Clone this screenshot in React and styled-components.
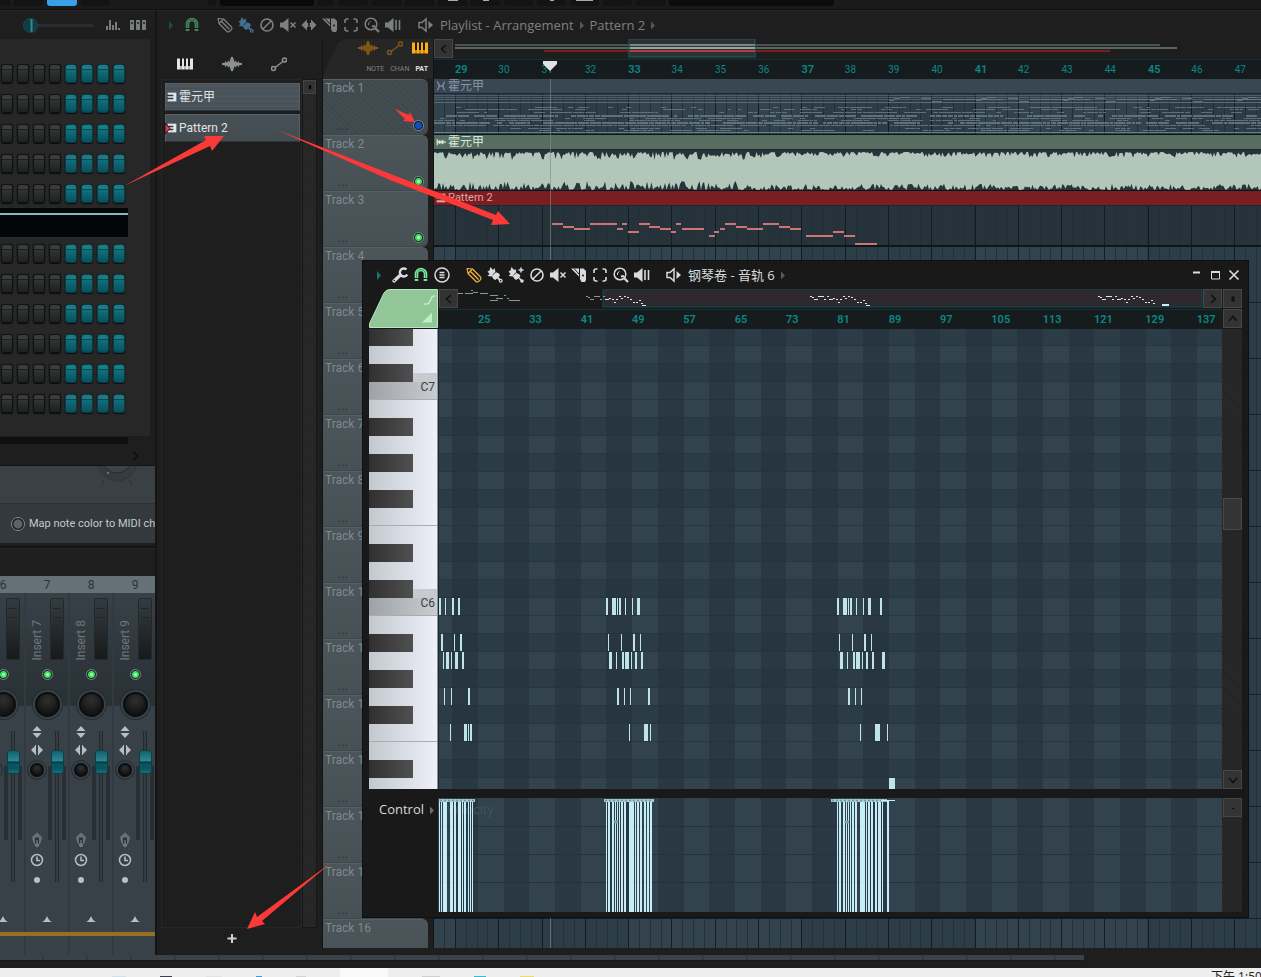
import React from "react";
import styled, { createGlobalStyle, css } from "styled-components";

const sans = `"Open Sans", "Noto Sans", "Noto Sans CJK SC", sans-serif`;
const narrow = `Roboto, "Noto Sans CJK SC", sans-serif`;
const teal = "#0b8787";

const GlobalStyle = createGlobalStyle`
  * { box-sizing: border-box; }
  html, body { margin: 0; height: 100%; background: #1e1e1e; }
  body { overflow: hidden; font-family: ${sans}; font-size: 12px; color: #a9b0b3; }
  button { border: 0; padding: 0; background: none; color: inherit; font: inherit; }
  input { margin: 0; }
  svg { display: block; }
`;

/* ---------- helpers ---------- */

const seeded = (seed) => {
  let s = seed;
  return () => {
    s = (s * 1664525 + 1013904223) % 4294967296;
    return s / 4294967296;
  };
};
const range = (n) => Array.from({ length: n }, (_, i) => i);

/* ---------- icons ---------- */

const glyphs = {
  play: <path d="M6 4l4 4.500-4 4.500z" fill="currentColor" />,
  magnet: (
    <>
      <path d="M3.500 14V7a4.500 4.500 0 0 1 9 0v7" fill="none" stroke="currentColor" strokeWidth="3.600" />
      <path d="M1 11.500h14" stroke="#1b1b1b" />
      <path d="M3.500 10.500V7a4.500 4.500 0 0 1 9 0v3.500" fill="none" stroke="#1b1b1b" strokeWidth=".8" opacity=".5" />
    </>
  ),
  pencil: (
    <g fill="none" stroke="currentColor" strokeWidth="1.200" strokeLinejoin="round">
      <path d="M1 1.500l5.500.5 8 8c1.500 2-2.500 6-4.500 4.500l-8-8z" />
      <path d="M4.500 4.500l8 8" strokeWidth="1.400" />
      <path d="M2 6.500l4.500-4.500" />
    </g>
  ),
  brush: (
    <>
      <path d="M3.500 0l2.500 3 1.500-2 1 4 3.500 1.500 1 2-4.500 4.500-2-1-1.500-2.500-4.500-.5 2-2-2-2.500 2-1z" fill="currentColor" />
      <path d="M5.500 8l4.500-4" stroke="#1b1b1b" strokeWidth=".8" />
      <path d="M10 10l4 4" stroke="currentColor" strokeWidth="1.800" />
      <circle cx="13.700" cy="13.700" r="2" fill="currentColor" />
      <circle cx="13.700" cy="13.700" r=".8" fill="#1b1b1b" />
    </>
  ),
  brushPlus: (
    <>
      <path d="M3.500 0l2.500 3 1.500-1 1 4 3 1.500 1 1.500-4 4-2-1-1.500-2.500-4.500-.5 2-2-2-2.500 2-1z" fill="currentColor" />
      <path d="M5.500 8l3.500-3" stroke="#1b1b1b" strokeWidth=".8" />
      <path d="M10 10l4 4M10.500 3h5M13 .5v5" stroke="currentColor" strokeWidth="1.500" />
      <circle cx="14" cy="14" r="1.800" fill="currentColor" />
    </>
  ),
  none: (
    <g fill="none" stroke="currentColor" strokeWidth="1.600">
      <circle cx="8" cy="8" r="6" />
      <path d="M3.700 12.300l8.600-8.600" />
    </g>
  ),
  mute: (
    <>
      <path d="M0 5.500h3L8.500 1v14L3 10.500H0z" fill="currentColor" />
      <path d="M10.500 5.500l5 5m0-5l-5 5" stroke="currentColor" strokeWidth="1.500" />
    </>
  ),
  slip: (
    <>
      <path d="M.5 8L6 2.500v3.500h4V2.500L15.500 8 10 13.500V10H6v3.500z" fill="currentColor" />
      <path d="M8 2v12" stroke="#1b1b1b" strokeWidth="1.500" />
    </>
  ),
  slice: (
    <>
      <path d="M0 1.500h8v8z" fill="currentColor" />
      <path d="M3 1.500L8 7" stroke="#1b1b1b" />
      <path d="M9 1.500h3.500L15 4v9l-1 2h-3.500L9 12z" fill="currentColor" />
      <circle cx="12" cy="8.500" r="1" fill="#1b1b1b" />
    </>
  ),
  select: (
    <path
      d="M2 6V4q0-2 2-2h1.500M10.500 2H12q2 0 2 2v2M14 10v2q0 2-2 2h-1.500M5.500 14H4q-2 0-2-2v-2"
      fill="none" stroke="currentColor" strokeWidth="1.600"
    />
  ),
  zoom: (
    <g fill="none" stroke="currentColor">
      <circle cx="7" cy="7" r="5.800" strokeWidth="1.500" />
      <path d="M6.500 4.500a3 3 0 0 0-2 3.500" strokeWidth="1" />
      <path d="M8 9.500l3-.5M11 11l4 4" strokeWidth="2.200" />
    </g>
  ),
  playback: (
    <>
      <path d="M0 5.500h3L8.500 1v14L3 10.500H0z" fill="currentColor" />
      <path d="M11 3v10M14.500 3v10" stroke="currentColor" strokeWidth="1.600" />
    </>
  ),
  speaker: (
    <>
      <path d="M1 5.500h3L8 2v12l-4-3.500H1z" fill="none" stroke="currentColor" strokeWidth="1.500" />
      <path d="M10.500 4l4.500 4-4.500 4z" fill="currentColor" />
    </>
  ),
  wrench: (
    <>
      <path d="M2 14l6.500-6" stroke="currentColor" strokeWidth="3.200" strokeLinecap="round" />
      <path d="M14.500 2.500a4 4 0 1 0 .8 5" fill="none" stroke="currentColor" strokeWidth="2.300" />
      <circle cx="2.300" cy="13.500" r=".8" fill="#1b1b1b" />
    </>
  ),
  menu: (
    <g fill="none" stroke="currentColor">
      <circle cx="8" cy="8" r="7" strokeWidth="1.500" />
      <path d="M5.500 5.500h5M5.500 8h5M5.500 10.500h5" strokeWidth="1.300" />
    </g>
  ),
  piano: (
    <>
      <path d="M0 2.500h16v11H0z" fill="currentColor" />
      <path d="M4 2v8M8 2v8M12 2v8" stroke="#1d1719" strokeWidth="2" />
      <path d="M4 9v5M8 9v5M12 9v5" stroke="#1d1719" strokeWidth=".5" />
    </>
  ),
  wave: (
    <path
      d="M0 7.200h2l1-1.700 1 1.700 1-2.200 1 1.500 1-3.500 1-1 1 1 1 3.500 1-1.500 1 2.200 1-1.700 1 1.700h2v1.600h-2l-1 1.700-1-1.700-1 2.200-1-1.500-1 3.500-1 1-1-1-1-3.500-1 1.500-1-2.200-1 1.700-1-1.700H0z"
      fill="currentColor"
    />
  ),
  line: (
    <g fill="none" stroke="currentColor" strokeWidth="1.500">
      <circle cx="2.500" cy="12.500" r="2" />
      <circle cx="13.500" cy="4" r="2" />
      <path d="M4 11.500L12 5.500" />
    </g>
  ),
  minimize: <path d="M5 5.500h7" stroke="currentColor" strokeWidth="2" />,
  maximize: (
    <>
      <path d="M4.500 5h8v7h-8z" fill="none" stroke="currentColor" />
      <path d="M4 5h9" stroke="currentColor" strokeWidth="2" />
    </>
  ),
  close: <path d="M3.500 3.500l9 9m0-9l-9 9" stroke="currentColor" strokeWidth="1.700" />,
  left: <path d="M10 4L5.500 8l4.500 4" fill="none" stroke="currentColor" strokeWidth="1.500" />,
  right: <path d="M6 4l4.500 4L6 12" fill="none" stroke="currentColor" strokeWidth="1.500" />,
  up: <path d="M4 10l4-4.500L12 10" fill="none" stroke="currentColor" strokeWidth="1.500" />,
  down: <path d="M4 6l4 4.500L12 6" fill="none" stroke="currentColor" strokeWidth="1.500" />,
  dot: <path d="M6.500 5.500h3v5h-3z" fill="currentColor" />,
  dash: <path d="M6.500 8.500h3" stroke="currentColor" />,
  plus: <path d="M8 4v9M3.500 8.500h9" stroke="currentColor" strokeWidth="2" />,
  updown: <path d="M8 2l4.500 5h-9zM3.500 9h9L8 14z" fill="currentColor" />,
  leftright: <path d="M2 8l4-4V3h1v10H6v-1zM14 8l-4-4V3H9v10h1v-1z" fill="currentColor" />,
  shape: (
    <>
      <path d="M3 5l5-4.500L13 5l-1 5-2 3H6l-2-3z" fill="#667076" />
      <path d="M6 5.500h4v6H6z" fill="#2c3439" />
      <path d="M8 8v7M6 13l2 2 2-2" fill="none" stroke="#858d92" />
    </>
  ),
  clock: (
    <g fill="none" stroke="currentColor">
      <circle cx="8" cy="8" r="5.500" strokeWidth="1.500" />
      <path d="M8 4.500V8.500h3" strokeWidth="1.500" />
    </g>
  ),
  bullet: <circle cx="8" cy="8" r="3" fill="currentColor" />,
  caret: <path d="M3 11q3-1 5-6 2 5 5 6z" fill="currentColor" />,
  bars: <path d="M1 13h2V9H1zM4 13h2V3H4zM7 13h2V8H7zM10 13h2V5h-2zM13 13h2v-2h-2z" fill="currentColor" />,
  steps: (
    <>
      <path d="M0 3h4v10H0zM6 3h4v10H6zM12 3h4v10h-4z" fill="currentColor" />
      <path d="M1 6h2M7 6h2M13 6h2" stroke="#1e1e1e" strokeWidth="1.500" />
    </>
  ),
  roll: (
    <>
      <path d="M1 1h14v14H1z" fill="currentColor" />
      <path d="M0 5.500h10M0 10.500h10" stroke="#2f383c" strokeWidth="2.500" />
    </>
  ),
  mutedClip: <path d="M2 1q6 7 0 14M14 1q-6 7 0 14M5 8h6" fill="none" stroke="currentColor" strokeWidth="2" />,
  audioClip: <path d="M1 3h2v4l4-3v3l5-3v3h4v2h-4v3L7 9v3L3 9v4H1z" fill="currentColor" />,
};

const Icon = ({ name, size = 16 }) => (
  <svg width={size} height={size} viewBox="0 0 16 16" aria-hidden="true">
    {glyphs[name]}
  </svg>
);

/* ---------- shared controls ---------- */

const ToolButton = styled.button`
  flex: none;
  width: ${(p) => p.$w || 21}px;
  height: 24px;
  display: grid;
  place-items: center;
  color: ${(p) => p.$color || "inherit"};
`;

const ToolGroup = styled.div`
  display: flex;
`;

const Crumb = styled.span`
  padding-left: ${(p) => (p.$first ? 4 : 0)}px;
  font-size: ${(p) => p.$size || 13}px;
  line-height: 18px;
  white-space: nowrap;
`;

const CrumbArrow = styled.span`
  width: 16px;
  display: grid;
  place-items: center;
  color: #54595b;
`;

const SquareButton = styled.button`
  flex: none;
  width: 19px;
  height: 19px;
  display: grid;
  place-items: center;
  background: #333;
  border: 1px solid #474747;
  color: #101010;
`;

const Led = styled.input.attrs({ type: "checkbox", defaultChecked: true })`
  appearance: none;
  flex: none;
  width: 11px;
  height: 11px;
  border-radius: 50%;
  border: 1px solid #7d878a;
  background: ${(p) =>
    p.$off
      ? "radial-gradient(circle, #1450b8 0 3px, #0a1838 4px)"
      : "radial-gradient(circle, #a8ffb6 0 1px, #43dd62 2px 3px, #102b1a 4px)"};
`;

/* ---------- application frame ---------- */

const Desktop = styled.div`
  position: relative;
  height: 100vh;
  display: flex;
  flex-direction: column;
  overflow: hidden;
  background: #1e1e1e;
`;

const TopBar = styled.header`
  flex: none;
  height: 10px;
  display: flex;
  align-items: flex-start;
  gap: 4px;
  background: #1a1a1a;
  border-bottom: 1px solid #111;
`;

const TopChip = styled.span`
  flex: none;
  width: ${(p) => p.$w}px;
  height: 6px;
  border-radius: 0 0 3px 3px;
  display: flex;
  justify-content: center;
  background: ${(p) => p.$bg || "#131313"};
  &::after {
    content: "";
    width: ${(p) => p.$mark || 0}px;
    height: 1px;
    background: #a5adb0;
  }
`;

const Workspace = styled.main`
  position: relative;
  flex: 1;
  min-height: 0;
  display: flex;
`;

const LeftColumn = styled.section`
  flex: none;
  width: 155px;
  display: flex;
  flex-direction: column;
  overflow: hidden;
`;

const MixerEdge = styled.div`
  flex: none;
  width: 86%;
  height: 6px;
  background: repeating-linear-gradient(90deg, #384248 0 42px, #303a40 42px 44px);
  border-bottom: 1px solid #15181f;
`;

const Taskbar = styled.footer`
  flex: none;
  height: 9px;
  margin-top: 7px;
  display: flex;
  align-items: flex-end;
  gap: 34px;
  padding-left: 112px;
  background: #eee;
  overflow: hidden;
  color: #222;
`;

const TaskMark = styled.span`
  width: ${(p) => p.$w}px;
  height: 1px;
  background: ${(p) => p.$c};
`;

const TaskTab = styled.span`
  width: 48px;
  height: 9px;
  background: #fafafa;
`;

const TaskClock = styled.time`
  align-self: flex-start;
  margin-left: auto;
  width: 50px;
  padding-top: 2px;
  font-size: 12px;
  line-height: 14px;
  white-space: nowrap;
`;

/* ---------- channel rack ---------- */

const RackBar = styled.div`
  flex: none;
  height: 29px;
  display: flex;
  align-items: center;
  justify-content: flex-end;
  gap: 9px;
  padding-right: 9px;
  border-top: 1px solid #272727;
  color: #777c7e;
`;

const SwingSlider = styled.input.attrs({ type: "range" })`
  appearance: none;
  width: 71px;
  height: 16px;
  margin-right: 2px;
  background: linear-gradient(#292d2f, #292d2f) center / 100% 3px no-repeat;
  &::-webkit-slider-thumb {
    appearance: none;
    width: 15px;
    height: 15px;
    border-radius: 50%;
    background: linear-gradient(90deg, #133b42 6px, #2f8b92 7px 8px, #133b42 9px);
    border: 1px solid #174b52;
  }
`;

const RackPanel = styled.div`
  flex: none;
  width: 151px;
  padding: 19px 0 18px;
  background: #272727;
  border-right: 1px solid #1a1a24;
  border-bottom: 1px solid #1a1a24;
`;

const StepRow = styled.div`
  height: 30px;
  display: flex;
  align-items: center;
  gap: 4px;
  padding-left: 1px;
`;

const Step = styled.button`
  width: 12px;
  height: 19px;
  border-radius: 3px;
  border: 1px solid ${(p) => (p.$on ? "#073a42" : "#101112")};
  box-shadow: 0 1px 1px #0a0a0a, 0 0 1px #0a0a0a;
  background: ${(p) =>
    p.$on
      ? "linear-gradient(#1b7c88 0 4px, #084650 4px 5px, #11707c 5px, #06525d)"
      : "linear-gradient(#383d3f 0 4px, #1c1f20 4px 5px, #303435 5px, #1e2122)"};
`;

const VelocityGraph = styled.div`
  width: 128px;
  height: 29px;
  margin-bottom: 1px;
  padding-top: 5px;
  background: #030608;
  &::before {
    content: "";
    display: block;
    height: 2px;
    background: #8fb3c3;
  }
`;

const RackFoot = styled.div`
  flex: none;
  height: 29px;
  display: flex;
  justify-content: flex-end;
  align-items: flex-end;
  padding: 0 12px 1px 0;
  background: linear-gradient(#0f0f0f, #0f0f0f) 0 0 / 128px 7px no-repeat;
  border-bottom: 1px solid #151515;
  color: #0c0c0c;
`;

const Inspector = styled.div`
  flex: none;
  height: 77px;
  display: flex;
  flex-direction: column;
  background: #3a4145;
`;

const InspectorTop = styled.div`
  height: 38px;
  padding-left: 88px;
  border-bottom: 1px solid #2a3033;
`;

const InspectorRow = styled.label`
  flex: 1;
  display: flex;
  align-items: center;
  gap: 4px;
  padding-left: 11px;
  background: #33393d;
  color: #c3c9cc;
  font: 11px/16px ${narrow};
  white-space: nowrap;
`;

const Radio = styled.input.attrs({ type: "radio" })`
  appearance: none;
  flex: none;
  width: 14px;
  height: 14px;
  border-radius: 50%;
  border: 1px solid #858b8e;
  background: radial-gradient(circle, #5c6366 0 4px, #1a1e20 5px);
`;

/* ---------- mixer ---------- */

const Mixer = styled.div`
  flex: 1;
  min-height: 0;
  margin-top: 5px;
  padding-top: 27px;
  border-top: 1px solid #272727;
  display: flex;
  flex-direction: column;
  outline: 2px solid #131313;
`;

const Strips = styled.div`
  flex: 1;
  display: flex;
  margin-left: -20px;
  background: #384148;
`;

const Strip = styled.div`
  flex: none;
  width: 44px;
  display: flex;
  flex-direction: column;
  border-left: 2px solid #313a40;
`;

const StripNumber = styled.div`
  height: 17px;
  margin-left: -2px;
  padding-left: 2px;
  background: #667077;
  color: #2b3236;
  font: 12px/18px ${narrow};
  text-align: center;
`;

const StripTop = styled.div`
  height: 69px;
  display: flex;
  align-items: flex-end;
  justify-content: space-between;
  padding: 5px 4px 2px 4px;
  background: linear-gradient(#384148, #2e363b);
`;

const StripName = styled.span`
  writing-mode: vertical-rl;
  transform: rotate(180deg);
  font: 12px/14px ${narrow};
  color: #6d777d;
`;

const Meter = styled.div`
  width: 14px;
  height: 62px;
  margin-left: auto;
  border: 1px solid #22292d;
  border-radius: 2px;
  background:
    linear-gradient(#1e2427, #1e2427) center 9px / 8px 1px no-repeat,
    linear-gradient(#1e2427, #1e2427) center 18px / 8px 1px no-repeat,
    linear-gradient(#343b3f, #181a1b);
`;

const StripPan = styled.div`
  height: 60px;
  display: flex;
  flex-direction: column;
  align-items: center;
  gap: 12px;
  padding-top: 7px;
  background: linear-gradient(#2e363b, #2a3135) 0 0 / 100% 44px no-repeat;
`;

const Knob = styled.button`
  flex: none;
  width: ${(p) => p.$size}px;
  height: ${(p) => p.$size}px;
  border-radius: 50%;
  border: 2px solid #0c0e0f;
  background: radial-gradient(circle at 50% 30%, #303030, #141414 70%);
  box-shadow: 0 0 0 2px #384148, 0 0 0 3px #262d31;
`;

const StripLower = styled.div`
  display: flex;
  height: 168px;
`;

const StripIcons = styled.div`
  width: 22px;
  display: flex;
  flex-direction: column;
  align-items: center;
  color: #b9bec1;
`;

const IconSlot = styled.span`
  flex: none;
  height: ${(p) => p.$h}px;
  display: grid;
  place-items: center;
`;

const FaderWrap = styled.div`
  width: 18px;
  display: flex;
  justify-content: center;
  padding-top: 9px;
  background:
    linear-gradient(90deg, #272f34 0 4px, transparent 4px 14px, #272f34 14px) 0 44px / 18px 74px no-repeat;
`;

const Fader = styled.input.attrs({ type: "range" })`
  appearance: none;
  writing-mode: vertical-lr;
  direction: rtl;
  width: 14px;
  height: 151px;
  background: linear-gradient(90deg, transparent 5px, #22292d 5px 6px, #333c42 6px 8px, #22292d 8px 9px, transparent 9px);
  &::-webkit-slider-thumb {
    appearance: none;
    width: 13px;
    height: 24px;
    border-radius: 3px;
    background: linear-gradient(#14606c, #2b8995 45%, #04343b 50%, #0b5560 60% 80%, #17707c);
    border: 1px solid #0b3f47;
  }
`;

const StripFoot = styled.div`
  flex: 1;
  display: flex;
  justify-content: center;
  margin-left: -2px;
  padding: 21px 0 0 2px;
  color: #b9bec1;
  background: linear-gradient(#96701c, #96701c) 0 42px / 100% 4px no-repeat;
`;

/* ---------- playlist ---------- */

const Playlist = styled.section`
  flex: 1;
  min-width: 0;
  display: flex;
  flex-direction: column;
  background: #1e1e1e;
  border-left: 2px solid #151515;
  border-top: 1px solid #272727;
  padding-bottom: 7px;
`;

const PlaylistBar = styled.div`
  flex: none;
  height: 28px;
  display: flex;
  align-items: center;
  gap: 12px;
  padding: 0 0 1px 3px;
  color: #7d8082;
`;

const Crumbs = styled.nav`
  display: flex;
  align-items: center;
`;

const PlaylistBody = styled.div`
  flex: 1;
  min-height: 0;
  display: flex;
`;

const Picker = styled.aside`
  flex: none;
  width: 165px;
  display: flex;
  flex-direction: column;
  padding-left: 4px;
`;

const PickerTabs = styled.div`
  height: 40px;
  display: flex;
  align-items: center;
  padding-top: 10px;
`;

const PickerTab = styled.button`
  width: 47px;
  display: grid;
  place-items: center;
  color: ${(p) => p.$color};
`;

const PickerMain = styled.div`
  flex: 1;
  min-height: 0;
  display: flex;
`;

const PickerList = styled.div`
  width: 141px;
  display: flex;
  flex-direction: column;
  gap: 3px;
  padding: 3px 1px 0 3px;
  border: 1px solid #23292b;
`;

const PatternItem = styled.button`
  position: relative;
  height: 28px;
  display: flex;
  align-items: center;
  gap: 2px;
  padding-left: 1px;
  border: 1px solid #566067;
  border-bottom-color: #2e3639;
  background: ${(p) =>
    p.$dense
      ? "repeating-linear-gradient(#4a545a 0 2px, #50595f 2px 3px, #475157 3px 5px)"
      : "linear-gradient(#465056, #424c51)"};
  color: #e0e4e6;
  font: 12px/16px ${narrow};
`;

const ActiveMark = styled.svg`
  position: absolute;
  left: -2px;
  top: 7px;
`;

const ScrollRail = styled.div`
  flex: none;
  width: ${(p) => p.$w}px;
  display: flex;
  flex-direction: column;
  background: repeating-linear-gradient(45deg, #242424 0 1px, #282828 1px 3px);
  border: 1px solid #161616;
`;

const RailCap = styled.button`
  height: 14px;
  display: grid;
  place-items: center;
  background: #333;
  border: 1px solid #444;
  color: #000;
`;

const AddRow = styled.div`
  height: 20px;
  display: flex;
  justify-content: center;
  padding-right: 20px;
  color: #ccd0d2;
`;

const TrackColumn = styled.div`
  flex: none;
  width: 111px;
  display: flex;
  flex-direction: column;
  overflow: hidden;
  border-left: 1px solid #101313;
`;

const Corner = styled.div`
  flex: none;
  height: 40px;
  display: flex;
  flex-direction: column;
  align-items: flex-end;
  padding: 0 5px 0 0;
  gap: 2px;
  background: #262626;
  clip-path: polygon(0 100%, 0 90%, 15px 10%, 22px 0, 100% 0, 100% 100%);
`;

const CornerIcons = styled.div`
  height: 18px;
  display: flex;
  align-items: center;
  gap: 9px;
`;

const CornerButton = styled.button`
  color: ${(p) => p.$color};
`;

const CornerLabels = styled.div`
  display: flex;
  gap: 6px;
  font: 7px/20px ${narrow};
  color: #808080;
  strong { color: #e2e2e2; }
`;

const TrackHead = styled.div`
  flex: none;
  height: 56px;
  width: 105px;
  display: flex;
  flex-direction: column;
  justify-content: space-between;
  padding: 0 4px 0 2px;
  border-top: 1px solid #566065;
  border-bottom: 1px solid #3d474c;
  border-radius: 0 6px 6px 0;
  font: 12px/16px ${narrow};
  color: #7f898e;
  background: ${(p) =>
    p.$muted
      ? "repeating-linear-gradient(45deg, #3f494d 0 2px, #434d51 2px 4px)"
      : "linear-gradient(#4b555a, #465055)"};
`;

const TrackFoot = styled.div`
  display: flex;
  align-items: center;
  justify-content: space-between;
  padding-left: 12px;
  font-size: 14px;
  line-height: 17px;
  color: #2a3135;
`;

const Arrangement = styled.div`
  flex: 1;
  min-width: 0;
  position: relative;
  display: flex;
  flex-direction: column;
  overflow: hidden;
  border-left: 1px solid #0f1416;
`;

const OverviewRow = styled.div`
  flex: none;
  height: 20px;
  display: flex;
  overflow: hidden;
`;

const Ruler = styled.div`
  flex: none;
  height: 19px;
  display: grid;
  grid-template-columns: repeat(${(p) => p.$count}, 1fr);
  width: ${(p) => p.$width}px;
  margin-left: ${(p) => p.$inset}px;
  font: 10px/20px ${narrow};
  color: ${teal};
`;

const RulerBand = styled.div`
  flex: none;
  overflow: hidden;
  background: #161c1e;
  border-top: 1px solid #0e3336;
`;

const Bar = styled.span`
  ${(p) =>
    p.$major &&
    css`
      font-size: 11px;
      font-weight: 600;
    `}
`;

const Lanes = styled.div`
  flex: 1;
  min-height: 0;
  overflow: hidden;
`;

const Lane = styled.div`
  height: 56px;
  overflow: hidden;
`;

const ClipTitle = styled.div`
  height: 15px;
  display: flex;
  align-items: center;
  gap: 2px;
  padding-left: 2px;
  font: ${(p) => p.$size || 12}px/14px ${narrow};
  color: ${(p) => p.$color};
  background: ${(p) => p.$bg};
  border-bottom: 1px solid #1d292f;
`;

const Canvas = styled.svg`
  width: 100%;
  height: ${(p) => p.$h};
`;

const Playhead = styled.svg`
  position: absolute;
  left: 108px;
  top: 20px;
  height: 100%;
`;

/* ---------- piano roll ---------- */

const PianoWindow = styled.section`
  position: absolute;
  left: 362px;
  right: 12px;
  top: 250px;
  bottom: 37px;
  display: flex;
  flex-direction: column;
  padding: 0 5px 5px;
  background: #191919;
  border: 1px solid #0d1012;
`;

const PianoBar = styled.div`
  flex: none;
  height: 28px;
  display: flex;
  align-items: center;
  gap: 11px;
  color: #d8dcde;
`;

const WindowButtons = styled.div`
  display: flex;
  margin-left: auto;
`;

const PianoGrid = styled.div`
  flex: 1;
  min-height: 0;
  display: grid;
  grid-template-columns: 69px minmax(0, 1fr) 20px;
  grid-template-rows: 40px minmax(0, 1fr) 9px 114px;
  padding: 0 1px;
`;

const RollHead = styled.div`
  display: flex;
  flex-direction: column;
  padding-left: 1px;
  overflow: hidden;
`;

const RollScroll = styled.div`
  height: 20px;
  display: flex;
  overflow: hidden;
`;

const HeadButtons = styled.div`
  display: flex;
  flex-direction: column;
  gap: 1px;
  padding-left: 1px;
`;

const Keyboard = styled.div`
  overflow: hidden;
  background: linear-gradient(90deg, #c3c8cf, #e1e4ec 70%, #eef1fa);
  border-right: 1px solid #8d9499;
`;

const Key = styled.div`
  height: ${(p) => (p.$first ? 17 : 18)}px;
  display: flex;
  justify-content: ${(p) => (p.$black ? "flex-start" : "flex-end")};
  padding-right: 2px;
  border-bottom: ${(p) => (p.$edge ? "1px solid #a9adb2" : "0")};
  font: 12px/10px ${narrow};
  color: #3a3f43;
  ${(p) => p.$c && css`background: linear-gradient(90deg, #9fa2a7, #c9cdd2);`}
  ${(p) =>
    p.$sharpC &&
    css`background: linear-gradient(#c7cbd0, #c7cbd0) 0 9px / 100% 9px no-repeat;`}
  &::before {
    content: "";
    display: ${(p) => (p.$black ? "block" : "none")};
    width: 44px;
    background: linear-gradient(90deg, #303030, #505050);
  }
`;

const Roll = styled.div`
  overflow: hidden;
  background: #2d3d47;
`;

const RollRail = styled.div`
  display: flex;
  flex-direction: column;
  justify-content: space-between;
  padding-left: 1px;
  background: repeating-linear-gradient(45deg, #232323 0 1px, #282828 1px 3px);
`;

const RollThumb = styled.div`
  height: 32px;
  margin-top: 169px;
  background: #343434;
  border: 1px solid #484848;
`;

const ControlLabel = styled.div`
  display: flex;
  align-items: flex-start;
  justify-content: flex-end;
  gap: 2px;
  font-size: 13px;
  line-height: 22px;
  color: #d5d9db;
  svg { margin-top: 4px; color: #6a6f71; }
`;

const ControlLane = styled.div`
  overflow: hidden;
  background: #2d3d47;
`;

const Divider = styled.div`
  grid-column: 1 / -1;
`;

const Annotations = styled.svg`
  position: absolute;
  inset: 0;
  width: 100%;
  height: 100%;
  pointer-events: none;
`;

/* ---------- drawings ---------- */

const BAR = 43.3;

const BarLines = ({ h, dim }) => (
  <g>
    {range(16).map((i) => (
      <rect key={i} x={21 + (i - 1) * BAR * 4} width={BAR * 4} height={h} fill={dim ? "#26333b" : i % 2 ? "#2d3d47" : "#32434d"} />
    ))}
    {range(160).map((i) => (
      <rect
        key={i}
        x={Math.round(21 - BAR * 2 + (i * BAR) / 4)}
        width="1"
        height={h}
        fill={i % 4 ? "#22303a" : "#101d26"}
      />
    ))}
  </g>
);

const MidiBody = () => {
  const rnd = seeded(7);
  const notes = [];
  const rows = [
    [13, 0.4], [15, 0.4], [18, 0.5], [21, 0.75], [24, 0.5], [26, 0.5],
    [28, 0.85], [31, 0.75], [34, 0.35], [36, 0.4],
  ];
  rows.forEach(([y, density]) => {
    let x = 0;
    while (x < 1400) {
      const w = [3, 5, 5, 11, 11, 22][Math.floor(rnd() * 6)];
      if (rnd() < density) notes.push([x, y, w]);
      x += w + 1;
    }
  });
  range(14).forEach((i) => {
    const x = 455 + i * 87;
    notes.push([x, 6, 5], [x + 5, 4, 6], [x + 11, 3, 10], [x + 32, 4, 10], [x + 43, 7, 10], [x + 54, 5, 60]);
  });
  return (
    <Canvas $h="41px">
      <BarLines h="41" />
      {[1, 3, 5, 8].map((y) => (
        <rect key={y} y={y} width="4000" height="1" fill="#5a6973" opacity={y === 8 ? 1 : 0.7} />
      ))}
      {notes.map(([x, y, w], i) => (
        <rect key={i} x={x} y={y} width={w} height={y === 28 || y === 21 ? 2 : 1} fill="#71808a" opacity=".75" />
      ))}
      <rect y="38" width="4000" height="1" fill="#6c7d88" />
      <rect y="40" width="4000" height="1" fill="#0d161b" />
    </Canvas>
  );
};

const WaveBody = () => {
  const rnd = seeded(21);
  const top = [];
  const bottom = [];
  range(1000).forEach((i) => {
    const x = i * 1.5;
    const loud = x > 330 ? 0.7 : 1;
    top.push(`${x},${(2 + Math.pow(rnd(), 2) * 8 * loud).toFixed(1)}`);
    bottom.unshift(`${x},${(40 - Math.pow(rnd(), 1.8) * 9 * loud).toFixed(1)}`);
  });
  return (
    <Canvas $h="41px">
      <rect width="4000" height="41" fill="#26333b" />
      <polygon points={[...top, ...bottom].join(" ")} fill="#b2c7ba" />
      <rect y="40" width="4000" height="1" fill="#0b1114" />
    </Canvas>
  );
};

const melody = [
  [696, 729, 672], [729, 761, 682], [761, 809, 687], [809, 890, 672], [890, 907, 687], [907, 923, 672],
  [923, 956, 697], [956, 988, 672], [988, 1020, 682], [1020, 1053, 687], [1053, 1069, 697],
  [1069, 1085, 672], [1085, 1151, 687], [1166, 1183, 708], [1183, 1199, 697], [1199, 1215, 687],
  [1215, 1248, 672], [1248, 1280, 682], [1280, 1329, 687], [1329, 1377, 672], [1377, 1410, 682],
  [1410, 1443, 687], [1459, 1540, 708], [1540, 1573, 697], [1573, 1605, 708], [1605, 1671, 733],
];

const MelodyBody = () => (
  <Canvas $h="41px">
    <BarLines h="41" dim />
    {melody.map(([a, b, y]) => (
      <rect key={a} x={Math.round((a - 342) / 3)} y={Math.round((y - 621) / 3)} width={Math.max(4, Math.round((b - a) / 3))} height="2" fill="#cf7474" />
    ))}
    <rect y="39" width="4000" height="2" fill="#0d161b" />
  </Canvas>
);

const EmptyLane = () => (
  <Canvas $h="56px">
    <BarLines h="56" />
    <rect y="55" width="4000" height="1" fill="#14212a" />
  </Canvas>
);

/* pitch rows from D#7 downwards; note spans are thirds of a pixel from the grid's left edge */
const rollNotes = [
  [15, [[3, 9], [21, 24], [42, 48], [60, 66], [504, 510], [522, 534], [537, 540], [543, 549], [561, 564], [582, 585], [597, 606], [1197, 1203], [1215, 1227], [1230, 1233], [1236, 1242], [1254, 1257], [1275, 1278], [1290, 1299], [1326, 1332]]],
  [17, [[9, 15], [48, 51], [66, 72], [510, 513], [549, 552], [585, 591], [606, 609], [1203, 1206], [1242, 1245], [1278, 1284], [1299, 1302]]],
  [18, [[15, 18], [24, 33], [39, 42], [51, 60], [72, 78], [513, 522], [534, 537], [552, 558], [561, 573], [579, 582], [591, 597], [609, 615], [1206, 1215], [1227, 1230], [1245, 1251], [1254, 1266], [1272, 1275], [1284, 1290], [1302, 1308], [1332, 1341]]],
  [20, [[18, 21], [39, 42], [90, 96], [537, 543], [558, 561], [576, 579], [630, 636], [1230, 1236], [1251, 1254], [1269, 1272]]],
  [22, [[36, 39], [78, 84], [85, 88], [90, 93], [96, 102], [573, 576], [618, 630], [636, 639], [1266, 1269], [1311, 1326], [1347, 1350]]],
  [25, [[1353, 1371]]],
];

const velocities = [
  [3, 6], [9, 12], [15, 27], [36, 45], [48, 54], [60, 69], [72, 75], [78, 84], [90, 93], [96, 99], [102, 105],
  [504, 507], [510, 516], [522, 528], [531, 534], [537, 540], [543, 546], [549, 555], [558, 564], [573, 588], [591, 594], [597, 603], [606, 612], [618, 624], [627, 633], [636, 642],
  [1197, 1200], [1203, 1209], [1215, 1221], [1224, 1227], [1230, 1233], [1236, 1239], [1242, 1248], [1251, 1257], [1266, 1281], [1284, 1287], [1290, 1296], [1299, 1305], [1311, 1317], [1320, 1329], [1332, 1335], [1347, 1353],
];

const blackRows = new Set([0, 2, 5, 7, 9, 12, 14, 17, 19, 21, 24]);
const HALF = 25.68;

const Columns = () =>
  range(60).map((i) => (
    <rect key={i} x={Math.round(i * HALF - 11.300)} width={Math.ceil(HALF)} height="2000" fill={i % 2 ? "#293842" : "#32434d"} />
  ));

const RollCanvas = () => (
  <Canvas $h="100%">
    <Columns />
    {range(60).map((i) => (
      <g key={i}>
        {blackRows.has(i % 26) && <rect y={i * 18 - 1} width="4000" height="18" fill="#22333e" opacity=".4" />}
        <rect y={i * 18 - 2} width="4000" height="1" fill="#24323b" opacity=".7" />
      </g>
    ))}
    {rollNotes.map(([row, spans]) =>
      spans.map(([a, b]) => (
        <rect key={a} x={Math.round(a / 3)} y={row * 18 - 1} width={Math.max(1, Math.round((b - a) / 3))} height="17" fill="#bfe3ea" />
      ))
    )}
    <rect width="1" height="2000" fill="#1c282f" />
  </Canvas>
);

const GhostText = styled.text`
  font: 13px ${sans};
  fill: #43525b;
`;

const ControlCanvas = () => (
  <Canvas $h="100%">
    <Columns />
    {[28, 56, 84].map((y) => (
      <rect key={y} y={y} width="4000" height="1" fill="#24323b" />
    ))}
    <GhostText x="9" y="16">Velocity</GhostText>
    {velocities.map(([a, b]) => (
      <rect key={a} x={a / 3} y="2" width={(b - a) / 3} height="112" fill="#c5edf8" />
    ))}
    {[[1, 36], [166, 50], [393, 56]].map(([x, w]) => (
      <g key={x}>
        <rect x={x} y="1" width={w} height="3" fill="#a4cbd5" />
        {range(Math.floor(w / 4)).map((i) => (
          <circle key={i} cx={x + 2 + i * 4} cy="2.500" r="1" fill="#68929d" />
        ))}
      </g>
    ))}
    <ellipse cx="178" cy="24" rx="2.500" ry="1.500" fill="#78a0aa" />
    <ellipse cx="409" cy="24" rx="2.500" ry="1.500" fill="#78a0aa" />
    <rect x="443" y="2" width="14" height="1" fill="#c5edf8" />
  </Canvas>
);

const miniTune = [[0, 0], [2, 1], [4, 3], [6, 3], [8, 0], [10, 0], [12, 0], [14, 3], [17, 0], [19, 3], [21, 3], [23, 2], [26, 3], [28, 6], [30, 3], [33, 0], [35, 2], [38, 0], [41, 1], [44, 3], [47, 6], [50, 6], [53, 4], [55, 7]];

const RollOverview = () => (
  <svg width="100%" height="19">
    <rect x="145" y="0" width="599" height="18" fill="#2e292d" stroke="#0f4b55" />
    {[[0, 4, 5], [7, 4, 8], [13, 1, 2], [15, 3, 5], [22, 4, 8], [32, 6, 8], [32, 11, 8], [38, 9, 7], [46, 6, 2], [49, 9, 2], [51, 11, 6], [57, 11, 5]].map(([x, y, w], i) => (
      <rect key={i} x={x} y={y} width={w} height="1" fill="#7f9ca4" />
    ))}
    {[128, 352, 640].map((base) =>
      miniTune.map(([x, y], i) => (
        <rect key={`${base}-${i}`} x={base + x} y={y + 7} width="2" height="1" fill={base + x < 146 ? "#7f9ca4" : "#d5e8ec"} />
      ))
    )}
    <rect x="184" y="16" width="4" height="1" fill="#d5e8ec" />
    <rect x="408" y="16" width="4" height="1" fill="#d5e8ec" />
    <rect x="704" y="15" width="7" height="2" fill="#d5e8ec" />
  </svg>
);

const PlaylistOverview = () => (
  <svg width="100%" height="20">
    <rect x="2" y="5" width="705" height="2" fill="#4b5154" />
    <rect x="2" y="8" width="722" height="2" fill="#56695d" />
    <rect x="91" y="11" width="566" height="2" fill="#751f22" />
    <rect x="176" y="0" width="126" height="18" fill="#6b7578" fillOpacity=".22" stroke="#14606b" />
    <rect x="177" y="5" width="125" height="2" fill="#7b8487" />
    <rect x="177" y="8" width="125" height="2" fill="#8fa899" />
    <rect x="177" y="11" width="125" height="2" fill="#b33c40" />
  </svg>
);

/* ---------- sections ---------- */

const StepLine = ({ row }) => (
  <StepRow>
    {range(8).map((i) => (
      <Step key={i} $on={i > 3} aria-label={`Channel ${row + 1} step ${i + 1}`} />
    ))}
  </StepRow>
);

const ChannelRack = () => (
  <>
    <RackBar>
      <SwingSlider aria-label="Swing" defaultValue="0" />
      <Icon name="bars" />
      <Icon name="steps" />
    </RackBar>
    <RackPanel>
      {range(5).map((r) => <StepLine key={r} row={r} />)}
      <VelocityGraph />
      {range(6).map((r) => <StepLine key={r} row={r + 5} />)}
    </RackPanel>
    <RackFoot><Icon name="right" /></RackFoot>
  </>
);

const MixerStrip = ({ n, named }) => (
  <Strip>
    <StripNumber>{n}</StripNumber>
    <StripTop>
      {named && <StripName>Insert {n}</StripName>}
      <Meter />
    </StripTop>
    <StripPan>
      <Led aria-label={`Insert ${n} on`} />
      <Knob $size={25} aria-label={`Insert ${n} pan`} />
    </StripPan>
    <StripLower>
      <StripIcons>
        <IconSlot $h={20}><Icon name="updown" /></IconSlot>
        <IconSlot $h={16}><Icon name="leftright" /></IconSlot>
        <IconSlot $h={24}><Knob $size={14} aria-label={`Insert ${n} stereo`} /></IconSlot>
        <IconSlot $h={48} />
        <IconSlot $h={20}><Icon name="shape" /></IconSlot>
        <IconSlot $h={20}><Icon name="clock" /></IconSlot>
        <IconSlot $h={20}><Icon name="bullet" /></IconSlot>
      </StripIcons>
      <FaderWrap>
        <Fader aria-label={`Insert ${n} volume`} defaultValue="85" />
      </FaderWrap>
    </StripLower>
    <StripFoot><Icon name="caret" /></StripFoot>
  </Strip>
);

const Tools = ({ names, colors = {} }) => (
  <ToolGroup>
    {names.map((n) => (
      <ToolButton key={n} $color={colors[n]} aria-label={n}>
        <Icon name={n} />
      </ToolButton>
    ))}
  </ToolGroup>
);

const SmallArrow = () => (
  <svg width="12" height="16" viewBox="2 0 12 16"><path d="M6 4.500l4 4-4 4z" fill="currentColor" /></svg>
);

const PianoRoll = () => {
  const names = { 3: "C7", 15: "C6" };
  return (
    <PianoWindow>
      <PianoBar>
        <Tools names={["play", "wrench", "magnet", "menu"]} colors={{ play: "#1d6f78", magnet: "#74e79c" }} />
        <Tools
          names={["pencil", "brush", "brushPlus", "none", "mute", "slice", "select", "zoom", "playback"]}
          colors={{ pencil: "#f2b437" }}
        />
        <Crumbs>
          <ToolButton aria-label="preview"><Icon name="speaker" /></ToolButton>
          <Crumb $first>钢琴卷 - 音轨 6</Crumb>
          <CrumbArrow><SmallArrow /></CrumbArrow>
        </Crumbs>
        <WindowButtons>
          {["minimize", "maximize", "close"].map((n) => (
            <ToolButton key={n} $w={19} aria-label={n}><Icon name={n} /></ToolButton>
          ))}
        </WindowButtons>
      </PianoBar>
      <PianoGrid>
        <svg width="69" height="39" viewBox="0 0 69 39">
          <path d="M.5 38.500v-4L15 4q2-3.500 6-3.500h47.500v38z" fill="#92c698" stroke="#b8e6bd" />
          <path d="M55 15h3q2 0 3-3l1-2q1-3 3-3h1" fill="none" stroke="#bdf0c2" strokeWidth="1.500" />
          <path d="M53 33.500l10-10v10z" fill="#bdf0c2" />
        </svg>
        <RollHead>
          <RollScroll>
            <SquareButton aria-label="Scroll left"><Icon name="left" /></SquareButton>
            <RollOverview />
            <SquareButton aria-label="Scroll right"><Icon name="right" /></SquareButton>
          </RollScroll>
          <RulerBand>
            <Ruler $count={15} $width={770} $inset={39}>
              {range(15).map((i) => <Bar key={i} $major>{25 + i * 8}</Bar>)}
            </Ruler>
          </RulerBand>
        </RollHead>
        <HeadButtons>
          <SquareButton aria-label="Zoom"><Icon name="dot" /></SquareButton>
          <SquareButton aria-label="Scroll up"><Icon name="up" /></SquareButton>
        </HeadButtons>
        <Keyboard>
          {range(26).map((i) => (
            <Key
              key={i}
              $first={i === 0}
              $black={blackRows.has(i)}
              $c={i === 3 || i === 15}
              $sharpC={i === 2 || i === 14}
              $edge={[3, 10, 15, 22].includes(i)}
            >
              {names[i]}
            </Key>
          ))}
        </Keyboard>
        <Roll><RollCanvas /></Roll>
        <RollRail>
          <RollThumb />
          <SquareButton aria-label="Scroll down"><Icon name="down" /></SquareButton>
        </RollRail>
        <Divider />
        <ControlLabel>Control<SmallArrow /></ControlLabel>
        <ControlLane><ControlCanvas /></ControlLane>
        <RollRail>
          <SquareButton aria-label="Resize"><Icon name="dash" /></SquareButton>
        </RollRail>
      </PianoGrid>
    </PianoWindow>
  );
};

const topChips = [
  [10], [29], [30, "#3aa0e6"], [29], [90, "#191919"], [8], [94, "#090909"], [16], [30], [29], [29], [29, null, 10],
  [29, null, 6], [29], [29, null, 4], [29, null, 17], [29], [29], [165, "#0c0c0c"],
];

export default function App() {
  return (
    <Desktop>
      <GlobalStyle />
      <TopBar>
        {topChips.map(([w, bg, mark], i) => <TopChip key={i} $w={w} $bg={bg} $mark={mark} />)}
      </TopBar>

      <Workspace>
        <LeftColumn>
          <ChannelRack />
          <Inspector>
            <InspectorTop>
              <svg width="60" height="22" viewBox="0 0 60 22">
                <circle cx="29" cy="-5" r="20" fill="#353b3f" stroke="#30363a" />
                <circle cx="29" cy="-8" r="15" fill="#3d4448" stroke="#262c2f" />
                <circle cx="20" cy="7" r="1" fill="#7b8286" />
                <path d="M16 14l-3 6M41 14l3 6" stroke="#2b3135" />
              </svg>
            </InspectorTop>
            <InspectorRow>
              <Radio name="map-color" />
              Map note color to MIDI ch
            </InspectorRow>
          </Inspector>
          <Mixer>
            <Strips>{[6, 7, 8, 9].map((n) => <MixerStrip key={n} n={n} named={n > 6} />)}</Strips>
          </Mixer>
        </LeftColumn>

        <Playlist>
          <PlaylistBar>
            <Tools names={["play", "magnet"]} colors={{ play: "#1c4a50", magnet: "#46855f" }} />
            <Tools
              names={["pencil", "brush", "none", "mute", "slip", "slice", "select", "zoom", "playback"]}
              colors={{ brush: "#426f8c" }}
            />
            <Crumbs>
              <ToolButton aria-label="preview"><Icon name="speaker" /></ToolButton>
              <Crumb $first>Playlist - Arrangement</Crumb>
              <CrumbArrow><SmallArrow /></CrumbArrow>
              <Crumb>Pattern 2</Crumb>
              <CrumbArrow><SmallArrow /></CrumbArrow>
            </Crumbs>
          </PlaylistBar>

          <PlaylistBody>
            <Picker>
              <PickerTabs>
                <PickerTab $color="#e3e5e6" aria-label="Patterns"><Icon name="piano" /></PickerTab>
                <PickerTab $color="#8b9194" aria-label="Audio"><Icon name="wave" size={20} /></PickerTab>
                <PickerTab $color="#8b9194" aria-label="Automation"><Icon name="line" /></PickerTab>
              </PickerTabs>
              <PickerMain>
                <PickerList>
                  <PatternItem $dense><Icon name="roll" size={10} />霍元甲</PatternItem>
                  <PatternItem>
                    <Icon name="roll" size={10} />Pattern 2
                    <ActiveMark width="7" height="13"><path d="M1 1l5 5.500L1 12z" fill="#e03a58" stroke="#141414" /></ActiveMark>
                  </PatternItem>
                </PickerList>
                <ScrollRail $w={15}><RailCap aria-label="Scroll patterns"><Icon name="dot" size={12} /></RailCap></ScrollRail>
              </PickerMain>
              <AddRow>
                <button aria-label="Add pattern"><Icon name="plus" /></button>
              </AddRow>
            </Picker>

            <TrackColumn>
              <Corner>
                <CornerIcons>
                  <CornerButton $color="#7c5716" aria-label="Notes"><Icon name="wave" size={20} /></CornerButton>
                  <CornerButton $color="#7c5716" aria-label="Channels"><Icon name="line" /></CornerButton>
                  <CornerButton $color="#ffae10" aria-label="Patterns"><Icon name="piano" /></CornerButton>
                </CornerIcons>
                <CornerLabels><span>NOTE</span><span>CHAN</span><strong>PAT</strong></CornerLabels>
              </Corner>
              {range(16).map((i) => (
                <TrackHead key={i} $muted={i === 0}>
                  Track {i + 1}
                  <TrackFoot>
                    ...
                    <Led $off={i === 0} aria-label={`Track ${i + 1} on`} />
                  </TrackFoot>
                </TrackHead>
              ))}
            </TrackColumn>

            <Arrangement>
              <OverviewRow>
                <SquareButton aria-label="Scroll left"><Icon name="left" /></SquareButton>
                <PlaylistOverview />
              </OverviewRow>
              <RulerBand>
                <Ruler $count={19} $width={823} $inset={21}>
                  {range(19).map((i) => <Bar key={i} $major={i % 4 === 0}>{29 + i}</Bar>)}
                </Ruler>
              </RulerBand>
              <Lanes>
                <Lane>
                  <ClipTitle $bg="#384753" $color="#8593a0"><Icon name="mutedClip" size={10} />霍元甲</ClipTitle>
                  <MidiBody />
                </Lane>
                <Lane>
                  <ClipTitle $bg="#566d5f" $color="#d5e6da"><Icon name="audioClip" size={10} />霍元甲</ClipTitle>
                  <WaveBody />
                </Lane>
                <Lane>
                  <ClipTitle $bg="#7b1e21" $color="#e2a3a3" $size={11}><Icon name="roll" size={10} />Pattern 2</ClipTitle>
                  <MelodyBody />
                </Lane>
                {range(13).map((i) => <Lane key={i}><EmptyLane /></Lane>)}
              </Lanes>
              <Playhead width="16">
                <rect x="8" y="20" width="1" height="2000" fill="#7c8b93" opacity=".6" />
                <path d="M1 2h14v3l-7 7-7-7z" fill="#dfe3e4" />
              </Playhead>
            </Arrangement>
          </PlaylistBody>
        </Playlist>

        <PianoRoll />
      </Workspace>

      <MixerEdge />
      <Taskbar>
        <TaskMark $w={14} $c="#cfe2ea" />
        <TaskMark $w={12} $c="#3c3f50" />
        <TaskMark $w={16} $c="#e3e3e3" />
        <TaskMark $w={6} $c="#3c9ad8" />
        <TaskMark $w={10} $c="#d2d2d2" />
        <TaskTab />
        <TaskMark $w={18} $c="#cfcfcf" />
        <TaskMark $w={12} $c="#35bcd0" />
        <TaskMark $w={14} $c="#ecdc6c" />
        <TaskClock>下午 1:50</TaskClock>
      </Taskbar>

      <Annotations>
        <g fill="#fb3a38">
          <polygon points="124,186 206,140 204,136 224,136 212,151 210,146" />
          <polygon points="275,129 496,215 498,211 510,224 491,225 493,220 390,180" />
          <polygon points="395,109 409,115 410,112 415,122 403,121 405,119" />
          <polygon points="332,862 257,917 255,912 247,929 265,924 262,921" />
        </g>
      </Annotations>
    </Desktop>
  );
}
